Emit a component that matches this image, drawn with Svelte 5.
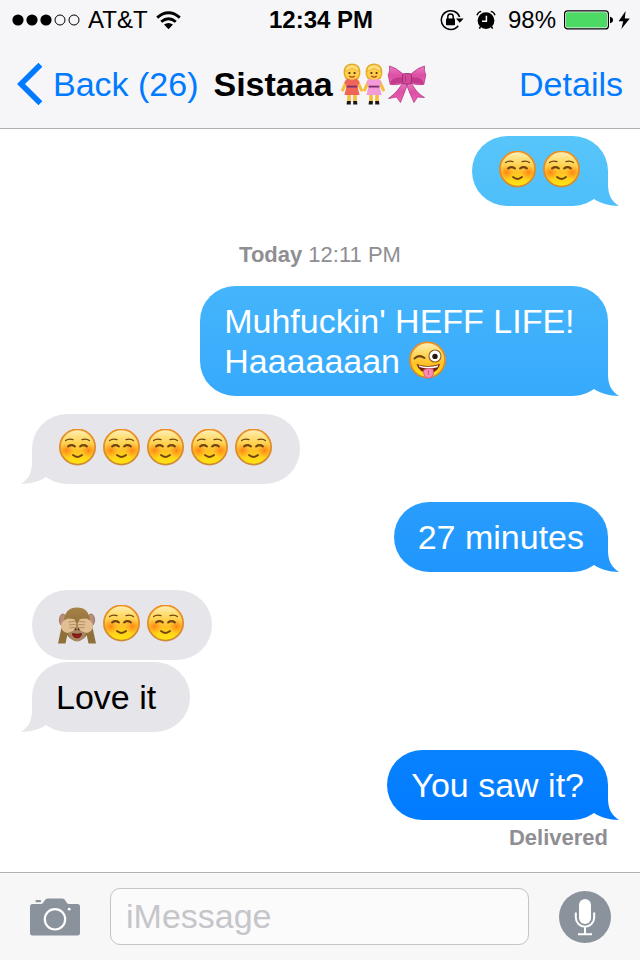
<script lang="ts">
	type Message = {
		from: 'me' | 'them';
		lines: string[];
		tail?: boolean;
	};

	let draft = $state('');

	const earlier: Message[] = [{ from: 'me', lines: ['☺☺'], tail: true }];

	const today: Message[] = [
		{ from: 'me', lines: ["Muhfuckin' HEFF LIFE!\u00a0", 'Haaaaaaan 😜'], tail: true },
		{ from: 'them', lines: ['☺☺☺☺☺'], tail: true },
		{ from: 'me', lines: ['27 minutes'], tail: true },
		{ from: 'them', lines: ['🙈☺☺'] },
		{ from: 'them', lines: ['Love it\u00a0'], tail: true },
		{ from: 'me', lines: ['You saw it?'], tail: true }
	];

	const emoji: Record<string, { id: string; label: string }> = {
		'☺': { id: 'smile', label: 'smiling face' },
		'😜': { id: 'wink', label: 'winking face with tongue' },
		'🙈': { id: 'monkey', label: 'see-no-evil monkey' }
	};

	// splits a line into plain text runs and single emoji
	function parts(line: string) {
		return line.split(/(☺|😜|🙈)/u).filter((p) => p !== '');
	}
</script>

<!-- shared emoji artwork -->
<svg class="defs" aria-hidden="true">
	<defs>
		<linearGradient id="skin" x1="0" y1="0" x2="0" y2="1">
			<stop offset="0" stop-color="#fff0bd" />
			<stop offset="0.25" stop-color="#ffdd70" />
			<stop offset="0.6" stop-color="#ffc226" />
			<stop offset="1" stop-color="#ffe70c" />
		</linearGradient>
		<linearGradient id="rim" x1="0" y1="0" x2="0" y2="1">
			<stop offset="0" stop-color="#ee8f20" />
			<stop offset="1" stop-color="#cf8a35" />
		</linearGradient>
		<radialGradient id="blush">
			<stop offset="0" stop-color="#ff7610" stop-opacity="0.8" />
			<stop offset="1" stop-color="#ff8a1c" stop-opacity="0" />
		</radialGradient>
		<linearGradient id="fur" x1="0" y1="0" x2="0" y2="1">
			<stop offset="0" stop-color="#a68348" />
			<stop offset="1" stop-color="#80602f" />
		</linearGradient>
		<linearGradient id="ribbon" x1="0" y1="0" x2="0" y2="1">
			<stop offset="0" stop-color="#ee7cc2" />
			<stop offset="0.5" stop-color="#dc4fa4" />
			<stop offset="1" stop-color="#f062b8" />
		</linearGradient>
	</defs>

	<symbol id="smile" viewBox="0 0 44 40">
		<circle cx="21.5" cy="18" r="17.6" fill="url(#skin)" stroke="url(#rim)" stroke-width="1.8" />
		<circle cx="10.5" cy="21.5" r="7.5" fill="url(#blush)" />
		<circle cx="32.5" cy="21.5" r="7.5" fill="url(#blush)" />
		<g fill="none" stroke="#704410" stroke-linecap="round">
			<path d="M9.6 11.6Q12.5 9.4 17 10.6M26 10.6Q30.5 9.4 33.4 11.6" stroke-width="1.3" />
			<path d="M12.2 17.4Q15.5 15 18.8 17.4M24.2 17.4Q27.5 15 30.8 17.4" stroke-width="2.2" />
			<path d="M17 26Q21.5 29.8 26 26" stroke-width="1.9" />
		</g>
	</symbol>

	<symbol id="wink" viewBox="0 0 44 40">
		<circle cx="18.5" cy="19" r="17.6" fill="url(#skin)" stroke="url(#rim)" stroke-width="1.8" />
		<path d="M5.5 17.5Q10 13 15.5 17" fill="none" stroke="#704410" stroke-width="2" stroke-linecap="round" />
		<circle cx="26" cy="15" r="6" fill="#fff" stroke="#8e641f" stroke-width="1.1" />
		<circle cx="26" cy="15.4" r="2.7" fill="#24160a" />
		<path d="M7.5 23Q18 27 31 23Q29.5 30.5 21.5 32Q10.5 32.5 7.5 23Z" fill="#75200e" />
		<path d="M9.5 24.2Q18 27.2 29.5 24.2L28.5 26.2Q18 28.8 10.5 26Z" fill="#fff" />
		<path d="M14.5 29Q18.5 26.5 24 28L24.5 33Q23.5 37 19.5 37Q15.5 36.7 14.8 33Z" fill="#f88db4" stroke="#d9507f" stroke-width="0.8" />
		<path d="M19.3 29L19.6 34" stroke="#d9507f" stroke-width="1" fill="none" />
	</symbol>

	<symbol id="monkey" viewBox="0 0 44 40">
		<ellipse cx="7" cy="15" rx="3.6" ry="6" fill="#bd8d7b" stroke="#8e6850" stroke-width="0.8" />
		<ellipse cx="35" cy="15" rx="3.6" ry="6" fill="#bd8d7b" stroke="#8e6850" stroke-width="0.8" />
		<path d="M21 2.5C30 2.5 34 8.5 34 17C34 27 30 35.5 21 35.5S8 27 8 17C8 8.5 12 2.5 21 2.5Z" fill="url(#fur)" />
		<path d="M11.5 20Q21 16 30.5 20V28Q27 36.5 21 36.5T11.5 28Z" fill="#a98560" />
		<path d="M16.5 28.6Q21 30 25.5 28.6Q25 32.8 21 32.8T16.5 28.6Z" fill="#a3141c" stroke="#4d160d" stroke-width="0.8" />
		<path d="M19.6 23.6V25.2M22.6 23.6V25.2" stroke="#392313" stroke-width="1.4" />
		<path d="M2 38.5L4.5 27L6 20L15 25L11.5 29L9.5 38.5ZM40 38.5L37.5 27L36 20L27 25L30.5 29L32.5 38.5Z" fill="#8f7039" />
		<path d="M5 22C5 18 8 14.5 12 13.6L17.5 14Q19.5 14.5 19 16L20.2 18L19.7 22L17 26L11.5 28Q6 27 5 22Z" fill="#e2bf93" />
		<path d="M37 22C37 18 34 14.5 30 13.6L24.5 14Q22.5 14.5 23 16L21.8 18L22.3 22L25 26L30.5 28Q36 27 37 22Z" fill="#e2bf93" />
		<path d="M18.8 16.2L12.5 17.2M19.6 19.4L13 20M19 22.6L13.5 22.8M23.2 16.2L29.5 17.2M22.4 19.4L29 20M23 22.6L28.5 22.8" stroke="#a77e56" stroke-width="0.8" fill="none" />
	</symbol>

	<symbol id="girl" viewBox="0 0 22 42">
		<path d="M8 29V39M14 29V39" stroke="#f5be3c" stroke-width="3.6" />
		<path d="M6 38H9.8V41.5H5.6ZM12.2 38H16L16.4 41.5H12.2Z" fill="#1b1713" />
		<path d="M5.5 18.5L1.6 27M16.5 18.5L20.4 27" stroke="#f5be3c" stroke-width="3" stroke-linecap="round" />
		<path d="M6 15.5H16L18.6 19.5L16.4 23L18.6 32H3.4L5.6 23L3.4 19.5Z" fill="currentColor" />
		<path d="M5.6 23.6H16.4" stroke="#7b2d71" stroke-width="1.8" />
		<path d="M2.8 12C1.4 4 6 0.5 11 0.5S20.6 4 19.2 12L17.5 16H4.5Z" fill="#e9ac28" />
		<ellipse cx="11" cy="10" rx="7" ry="6.8" fill="#ffcf4c" />
		<path d="M3.8 8.4Q4.6 1.8 11 1.8T18.2 8.4Q14 7 11 5Q8 7 3.8 8.4Z" fill="#ffe07a" stroke="#d99a20" stroke-width="0.5" />
		<circle cx="8.4" cy="10" r="1.1" fill="#4c2c0d" />
		<circle cx="13.6" cy="10" r="1.1" fill="#4c2c0d" />
		<path d="M8.2 13Q11 15.4 13.8 13" fill="none" stroke="#b0411d" stroke-width="1.2" />
	</symbol>

	<symbol id="bow" viewBox="0 0 40 40">
		<path d="M16 19C13 25 8 31 1.5 35.5L9.5 34L13.5 39.5C16 33 18.5 27 21 20ZM24 19C27 25 31 31 37.5 34.5L30.5 34L27 39.5C24 33 21.5 27 19 20Z" fill="url(#ribbon)" stroke="#ad2d7c" stroke-width="0.7" />
		<path d="M16 11Q9 4.5 2.5 3Q3.2 8 1.2 12L3.2 21.5Q10 22.5 17 20ZM24 11Q31 4.5 37.5 3Q36.8 8 38.8 12L36.8 21.5Q30 22.5 23 20Z" fill="url(#ribbon)" stroke="#ad2d7c" stroke-width="0.7" />
		<path d="M3.5 19Q6 13.5 16 14.5V19Q10 21.5 3.5 21ZM36.5 19Q34 13.5 24 14.5V19Q30 21.5 36.5 21Z" fill="#c23a8d" />
		<rect x="15.5" y="10.5" width="9" height="10.5" rx="2" fill="#d04a9c" stroke="#98266c" stroke-width="0.8" />
		<path d="M18.5 12.5V18.5" stroke="#a32d77" stroke-width="0.7" />
	</symbol>
</svg>

{#snippet bubble(msg: Message)}
	<div class="bubble {msg.from}" class:tail={msg.tail}>
		{#each msg.lines as line}
			<p>{#each parts(line) as part}{#if emoji[part]}<svg class="emoji" role="img" aria-label={emoji[part].label}><use href="#{emoji[part].id}" /></svg>{:else}{part}{/if}{/each}</p>
		{/each}
	</div>
{/snippet}

<div class="screen">
	<header>
		<div class="status">
			<div class="status-left">
				<svg width="68" height="12" viewBox="0 0 68 12" aria-hidden="true">
					<circle cx="6" cy="6" r="5.6" />
					<circle cx="20" cy="6" r="5.6" />
					<circle cx="34" cy="6" r="5.6" />
					<circle cx="48" cy="6" r="5" fill="none" stroke="#000" />
					<circle cx="62" cy="6" r="5" fill="none" stroke="#000" />
				</svg>
				<span>AT&amp;T</span>
				<svg width="25" height="19" viewBox="0 0 25 19" aria-hidden="true">
					<path d="M1.2 6.6Q12.5 -3 23.8 6.6M5.2 10.8Q12.5 4.6 19.8 10.8" fill="none" stroke="#000" stroke-width="2.8" />
					<path d="M8 13.6Q12.5 10.2 17 13.6L12.5 18.2Z" />
				</svg>
			</div>
			<time>12:34 PM</time>
			<div class="status-right">
				<svg class="lock" width="24" height="22" viewBox="0 0 24 22" aria-hidden="true">
					<path d="M19.6 8A9.4 9.4 0 1 0 18.2 16.8" fill="none" stroke="#000" stroke-width="1.5" />
					<path d="M16 9.4H23.6L19.8 13.8Z" />
					<rect x="6" y="9.6" width="9" height="6.6" rx="0.8" />
					<path d="M7.8 10V7.8A2.7 2.7 0 0 1 13.2 7.8V10" fill="none" stroke="#000" stroke-width="1.5" />
				</svg>
				<svg class="alarm" width="20" height="20" viewBox="0 0 20 20" aria-hidden="true">
					<circle cx="10" cy="10.6" r="8.4" />
					<path d="M10.4 5.8V11.2H6" fill="none" stroke="#fff" stroke-width="1.5" />
					<path d="M1 5.2Q2 2 5.2 1.4M19 5.2Q18 2 14.8 1.4" fill="none" stroke="#000" stroke-width="1.4" />
					<path d="M4.5 16.5L3.4 18.6M15.5 16.5L16.6 18.6" stroke="#000" stroke-width="1.6" />
				</svg>
				<span>98%</span>
				<svg width="66" height="20" viewBox="0 0 66 20" aria-hidden="true">
					<rect x="0.6" y="0.9" width="43.8" height="18" rx="3" fill="#fff" stroke="#000" stroke-width="1.2" />
					<rect x="2" y="2.3" width="41" height="15.2" rx="1.5" fill="#4cd964" />
					<path d="M46 6.8Q49 7.5 49 10T46 13.2Z" />
					<path d="M61.6 1L54.6 11.2H59.2L57.4 19L65.8 8.4H60.8Z" />
				</svg>
			</div>
		</div>

		<nav>
			<a class="back" href="#messages">
				<svg width="26" height="44" viewBox="0 0 26 44" aria-hidden="true">
					<path d="M23.4 2.8L4 22L23.4 41.2" fill="none" stroke="#007aff" stroke-width="5.6" />
				</svg>
				Back (26)
			</a>
			<h1>
				Sistaaa
				<span class="title-emoji">
					<svg class="girl red" role="img" aria-label="girl"><use href="#girl" /></svg>
					<svg class="girl pink" role="img" aria-label="girl"><use href="#girl" /></svg>
					<svg class="bow" role="img" aria-label="ribbon"><use href="#bow" /></svg>
				</span>
			</h1>
			<a class="details" href="#details">Details</a>
		</nav>
	</header>

	<main>
		{#each earlier as msg}
			{@render bubble(msg)}
		{/each}
		<div class="stamp"><strong>Today</strong> 12:11 PM</div>
		{#each today as msg}
			{@render bubble(msg)}
		{/each}
		<div class="receipt">Delivered</div>
	</main>

	<form class="compose" onsubmit={(e) => e.preventDefault()}>
		<button type="button" aria-label="Camera">
			<svg width="50" height="38" viewBox="0 0 50 38">
				<path d="M2.5 6H11C14 6 14.2 0.5 18 0.5H32C35.8 0.5 36 6 39 6H47.5Q50 6 50 8.5V35Q50 37.5 47.5 37.5H2.5Q0 37.5 0 35V8.5Q0 6 2.5 6Z" fill="#8a929c" />
				<rect x="5.5" y="2" width="5.5" height="2.2" rx="0.8" fill="#8a929c" />
				<circle cx="25" cy="21.3" r="10.2" fill="none" stroke="#fff" stroke-width="2.2" />
				<circle cx="39.2" cy="11.2" r="1.4" fill="#fff" />
			</svg>
		</button>
		<input type="text" aria-label="Message" placeholder="iMessage" bind:value={draft} />
		<button type="button" aria-label="Record audio">
			<svg width="52" height="52" viewBox="0 0 52 52">
				<circle cx="26" cy="26" r="26" fill="#8a929c" />
				<rect x="20" y="8" width="12" height="25" rx="6" fill="#fff" />
				<path d="M16.8 21.5V26.5A9.2 9.2 0 0 0 35.2 26.5V21.5M26 36V43M19 43.2H33" fill="none" stroke="#fff" stroke-width="2" />
			</svg>
		</button>
	</form>
</div>

<style>
	:global(body) {
		margin: 0;
		background: #fff;
	}
	.defs {
		position: absolute;
		width: 0;
		height: 0;
	}
	.screen {
		display: flex;
		flex-direction: column;
		min-height: 100vh;
		font-family: "Liberation Sans", Arial, sans-serif;
		font-size: 34px;
		line-height: 40px;
		color: #000;
	}

	/* HEADER */
	header {
		background: #f6f6f8;
		border-bottom: 1px solid #b0b0b4;
	}
	.status {
		display: grid;
		grid-template-columns: 1fr auto 1fr;
		align-items: center;
		height: 40px;
		padding: 0 10px 0 12px;
		font-size: 24px;
	}
	.status-left, .status-right {
		display: flex;
		align-items: center;
		gap: 8px;
	}
	.status-right { justify-content: flex-end; }
	.status time { font-weight: 700; }
	.lock, .alarm { margin-right: 4px; }
	nav {
		display: grid;
		grid-template-columns: 1fr auto 1fr;
		align-items: center;
		height: 88px;
		padding: 0 17px;
	}
	nav a {
		color: #007aff;
		text-decoration: none;
		white-space: nowrap;
	}
	.back {
		display: flex;
		align-items: center;
		gap: 10px;
	}
	.details { text-align: right; }
	h1 {
		display: flex;
		align-items: center;
		gap: 8px;
		margin: 0;
		font-size: 34px;
		font-weight: 700;
	}
	.title-emoji { display: flex; }
	.girl {
		width: 22px;
		height: 42px;
	}
	.red { color: #ef6658; }
	.pink { color: #f39ad8; }
	.bow {
		width: 40px;
		height: 40px;
		margin-left: 2px;
	}

	/* CONVERSATION */
	main {
		flex: 1;
		display: flex;
		flex-direction: column;
		padding: 7px 32px 0;
	}
	.bubble {
		position: relative;
		max-width: 75%;
		padding: 15px 24px;
		border-radius: 35px;
	}
	.bubble + .bubble { margin-top: 18px; }
	.bubble.them + .bubble.them { margin-top: 2px; }
	.bubble p {
		margin: 0;
		min-height: 40px;
	}
	.me {
		align-self: flex-end;
		color: #fff;
	}
	.me, .me.tail::after {
		background: linear-gradient(#5ac8fa 12%, #007aff 86%) fixed;
	}
	.them { align-self: flex-start; }
	.them, .them.tail::after { background: #e5e5ea; }
	.tail::after {
		content: '';
		position: absolute;
		bottom: 0;
		width: 30px;
		height: 36px;
	}
	.me.tail::after {
		right: -12px;
		clip-path: path('M18 0V14C18 24 21 31 29 36C19 36 10 33 4 29L0 20Z');
	}
	.them.tail::after {
		left: -12px;
		clip-path: path('M12 0V14C12 24 9 31 1 36C11 36 20 33 26 29L30 20Z');
	}
	.emoji {
		display: inline-block;
		width: 44px;
		height: 40px;
		vertical-align: top;
	}
	.stamp, .receipt {
		font-size: 22px;
		line-height: 26px;
		color: #8e8e93;
	}
	.stamp {
		margin: 36px 0 18px;
		text-align: center;
	}
	.receipt {
		margin: 5px 0 18px;
		font-weight: 700;
		text-align: right;
	}

	/* COMPOSE BAR */
	.compose {
		display: flex;
		align-items: center;
		gap: 30px;
		padding: 15px 29px 15px 30px;
		background: #f7f7f8;
		border-top: 1px solid #b0b0b4;
	}
	.compose button {
		display: flex;
		padding: 0;
		border: none;
		background: none;
		cursor: pointer;
	}
	.compose input {
		flex: 1;
		min-width: 0;
		height: 57px;
		box-sizing: border-box;
		padding: 0 15px;
		border: 1px solid #c4c4c9;
		border-radius: 10px;
		background: #fbfbfc;
		font: inherit;
		color: #000;
		outline: none;
	}
	.compose input::placeholder {
		color: #c5c5ca;
		opacity: 1;
	}
</style>
